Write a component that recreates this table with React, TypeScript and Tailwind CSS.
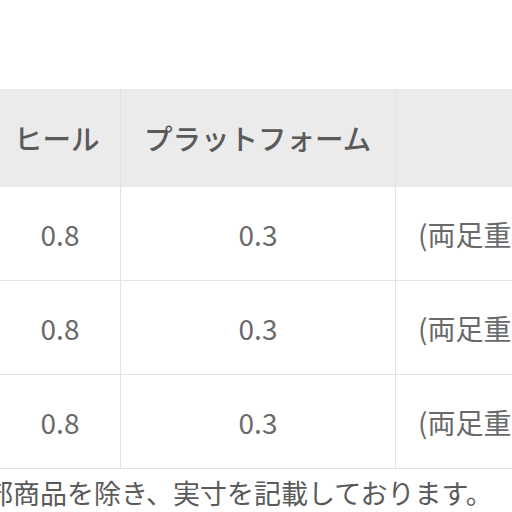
export default function App() {
  const rows = [1, 2, 3];

  return (
    <div
      className="h-[512px] w-[512px] overflow-hidden bg-white"
      style={{ fontFamily: '"Noto Sans CJK JP", "Noto Sans", sans-serif' }}
    >
      <div className="pt-[89px]">
        <div className="grid w-[560px] grid-cols-[121px_275px_1fr]">
          <div className="flex h-[98px] items-center border-r border-[#e2e2e2] bg-[#ebebeb] pl-[14px] text-[28.5px] font-medium text-[#5a5a5a]">
            ヒール
          </div>
          <div className="flex h-[98px] items-center border-r border-[#e2e2e2] bg-[#ebebeb] pl-[23px] text-[28.5px] font-medium text-[#5a5a5a]">
            プラットフォーム
          </div>
          <div className="h-[98px] bg-[#ebebeb]"></div>

          {rows.map((r) => (
            <div key={r} className="contents">
              <div className="flex h-[94px] items-center justify-center border-r border-b border-[#e2e2e2] text-[28px] text-[#6a6a6a]">
                0.8
              </div>
              <div className="flex h-[94px] items-center justify-center border-r border-b border-[#e2e2e2] text-[28px] text-[#6a6a6a]">
                0.3
              </div>
              <div className="flex h-[94px] items-center whitespace-nowrap border-b border-[#e2e2e2] pl-[22px] text-[28px] text-[#6a6a6a]">
                (両足重ね)
              </div>
            </div>
          ))}
        </div>

        <p className="ml-[-14px] mt-[10px] whitespace-nowrap text-[27px] leading-none text-[#5a5a5a]">
          部商品を除き、実寸を記載しております。
        </p>
      </div>
    </div>
  );
}
